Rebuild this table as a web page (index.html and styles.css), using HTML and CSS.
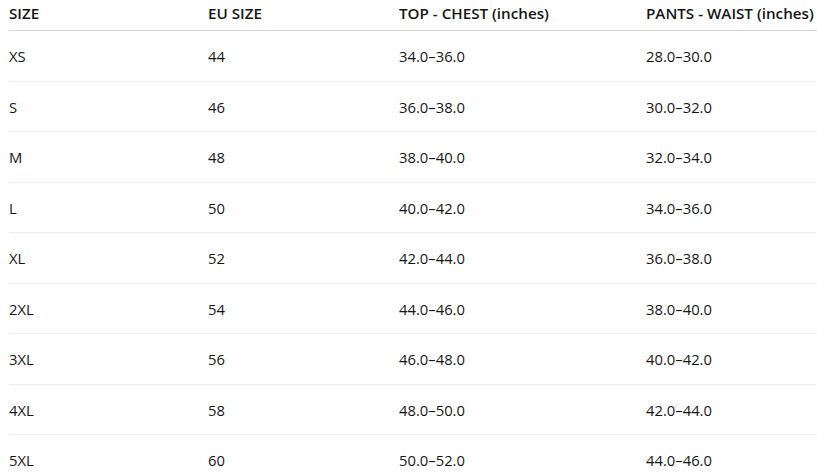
FILE: index.html
```html
<!DOCTYPE html>
<html lang="en">
<head>
<meta charset="utf-8">
<title>Size chart</title>
<link rel="stylesheet" href="styles.css">
</head>
<body>
<table class="size-table">
  <colgroup>
    <col class="c1"><col class="c2"><col class="c3"><col class="c4">
  </colgroup>
  <thead>
    <tr><th>SIZE</th><th>EU SIZE</th><th>TOP - CHEST (inches)</th><th>PANTS - WAIST (inches)</th></tr>
  </thead>
  <tbody>
    <tr><td>XS</td><td>44</td><td>34.0–36.0</td><td>28.0–30.0</td></tr>
    <tr><td>S</td><td>46</td><td>36.0–38.0</td><td>30.0–32.0</td></tr>
    <tr><td>M</td><td>48</td><td>38.0–40.0</td><td>32.0–34.0</td></tr>
    <tr><td>L</td><td>50</td><td>40.0–42.0</td><td>34.0–36.0</td></tr>
    <tr><td>XL</td><td>52</td><td>42.0–44.0</td><td>36.0–38.0</td></tr>
    <tr><td>2XL</td><td>54</td><td>44.0–46.0</td><td>38.0–40.0</td></tr>
    <tr><td>3XL</td><td>56</td><td>46.0–48.0</td><td>40.0–42.0</td></tr>
    <tr><td>4XL</td><td>58</td><td>48.0–50.0</td><td>42.0–44.0</td></tr>
    <tr><td>5XL</td><td>60</td><td>50.0–52.0</td><td>44.0–46.0</td></tr>
  </tbody>
</table>
</body>
</html>
```

FILE: styles.css
```css
html, body {
  margin: 0;
  overflow: hidden;
  background: #ffffff;
}
body {
  padding-left: 9px;
  font-family: "Open Sans", "Noto Sans", sans-serif;
  font-size: 14.8px;
  color: #161616;
}
.size-table {
  border-collapse: collapse;
  table-layout: fixed;
  width: 830px;
}
.c1 { width: 199px; }
.c2 { width: 191px; }
.c3 { width: 247px; }
.c4 { width: 193px; }
.size-table th,
.size-table td {
  text-align: left;
  padding: 0;
  white-space: nowrap;
  line-height: 18px;
}
.size-table th {
  font-weight: 600;
  font-size: 15.2px;
  padding-top: 4px;
  padding-bottom: 8px;
  border-bottom: 1px solid #d9d9d9;
}
.size-table td {
  padding-top: 16px;
  padding-bottom: 15.5px;
  border-bottom: 1px solid #eeeeee;
}
```
